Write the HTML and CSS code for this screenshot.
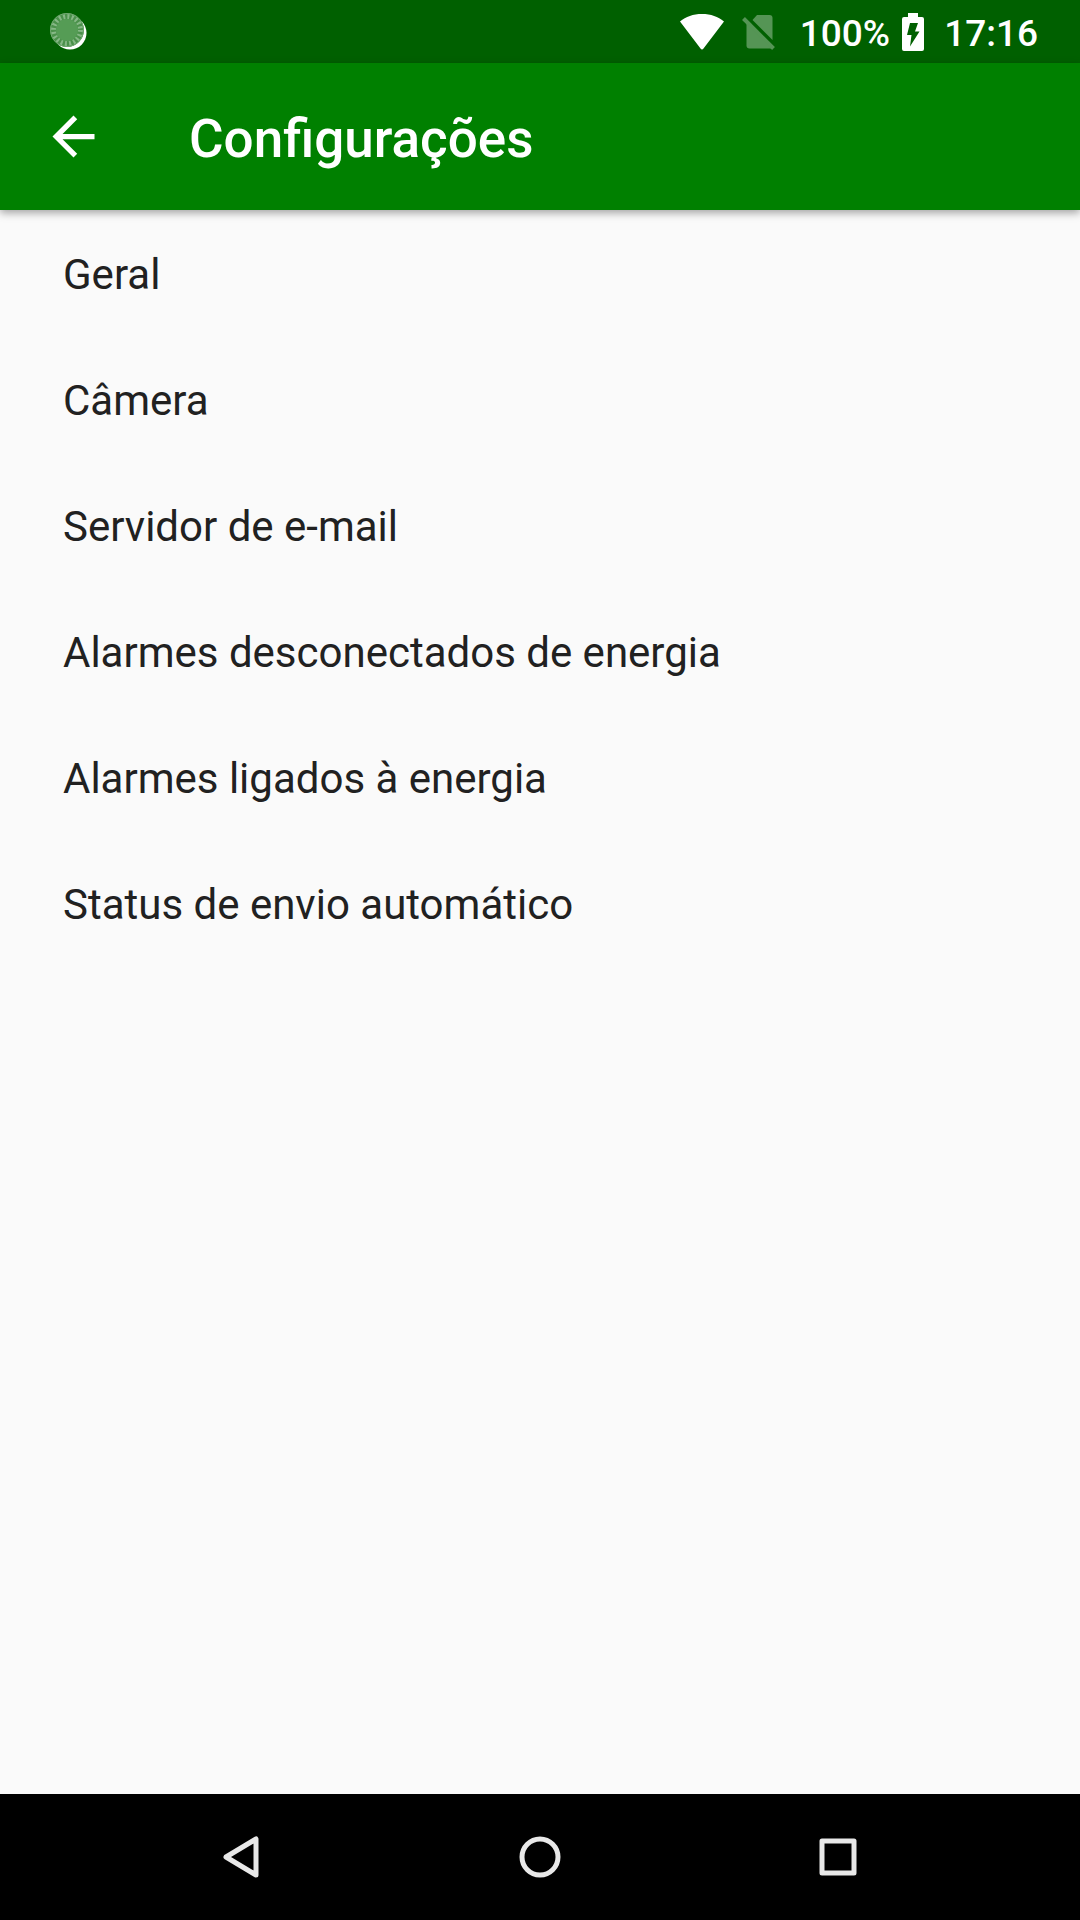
FILE: index.html
```
<!DOCTYPE html>
<html lang="pt-BR">
<head>
    <meta charset="UTF-8">
    <meta name="viewport" content="width=device-width, initial-scale=1.0">
    <title>Configurações</title>
    <link rel="stylesheet" href="styles.css">
</head>
<body>
    <div class="status-bar">
        <svg class="app-icon" viewBox="0 0 40 40" width="40" height="40">
            <circle cx="22" cy="21" r="16.500" fill="#fff"/>
            <circle cx="19" cy="18" r="17" fill="#4a904a"/>
            <circle cx="19" cy="18" r="13.500" fill="none" stroke="#86b886" stroke-width="5" stroke-dasharray="2 2.240"/>
            <circle cx="19" cy="18" r="11" fill="#559c55"/>
            <circle cx="19" cy="18" r="16.500" fill="none" stroke="#6fa86f" stroke-width="1"/>
        </svg>
        <div class="status-right">
            <svg class="wifi" viewBox="0 0 46 38" width="46" height="38">
                <path d="M1 8.500C7 3.500 14 1 23 1s16 2.500 22 7.500L24.500 35.500q-1.500 2-3 0z" fill="#fff"/>
            </svg>
            <svg class="sim" viewBox="0 0 36 38" width="36" height="38">
                <path d="M17 2h12.500a3 3 0 0 1 3 3v22l-20-20z" fill="#559555"/>
                <path d="M6.500 8.500l26.500 27H9.500a3 3 0 0 1-3-3z" fill="#559555"/>
                <path d="M3.500 5.500l30 30" fill="none" stroke="#559555" stroke-width="4"/>
            </svg>
            <span class="percent">100%</span>
            <svg class="battery" viewBox="0 0 22 38" width="22" height="38">
                <path d="M6 4V0h10v4h4a2 2 0 0 1 2 2v30a2 2 0 0 1-2 2H2a2 2 0 0 1-2-2V6a2 2 0 0 1 2-2z" fill="#fff"/>
                <path d="M8 10h8l-3 8.500h4.500L8 33.500l1.500-11.500H5z" fill="#006000"/>
            </svg>
            <span class="time">17:16</span>
        </div>
    </div>

    <header class="app-bar">
        <button class="back" type="button" aria-label="Voltar">
            <svg viewBox="0 0 24 24" width="63" height="63">
                <path d="M20 11H7.830l5.590-5.590L12 4l-8 8 8 8 1.410-1.410L7.830 13H20z" fill="#fff"/>
            </svg>
        </button>
        <h1>Configurações</h1>
    </header>

    <main>
        <ul class="settings">
            <li><a href="#geral">Geral</a></li>
            <li><a href="#camera">Câmera</a></li>
            <li><a href="#email">Servidor de e-mail</a></li>
            <li><a href="#desconectados">Alarmes desconectados de energia</a></li>
            <li><a href="#ligados">Alarmes ligados à energia</a></li>
            <li><a href="#status">Status de envio automático</a></li>
        </ul>
    </main>

    <nav class="nav-bar">
        <button type="button" aria-label="Voltar">
            <svg viewBox="0 0 44 44" width="44" height="44">
                <path d="M36 4v36L6 22z"/>
            </svg>
        </button>
        <button type="button" aria-label="Início">
            <svg viewBox="0 0 44 44" width="44" height="44">
                <circle cx="22" cy="22" r="18"/>
            </svg>
        </button>
        <button type="button" aria-label="Recentes">
            <svg viewBox="0 0 44 44" width="44" height="44">
                <path d="M6 6h32v32H6z"/>
            </svg>
        </button>
    </nav>
</body>
</html>
```
FILE: styles.css
```
* { box-sizing: border-box; }
body { font-family: Roboto, sans-serif; background-color: #fafafa; color: #212121; margin: 0; min-height: 100vh; display: flex; flex-direction: column; }
svg { display: block; }
button { padding: 0; border: none; background: none; cursor: pointer; }

.status-bar { display: flex; align-items: center; justify-content: space-between; height: 63px; padding: 0 42px 0 48px; background-color: #006000; color: #fff; font-size: 37px; font-weight: 500; line-height: 63px; }
.status-right { display: flex; align-items: center; }
.sim { margin-left: 15px; }
.percent { margin-left: 24px; padding-top: 3px; }
.battery { margin-left: 12px; }
.time { margin-left: 20px; padding-top: 3px; }

.app-bar { display: flex; align-items: center; height: 147px; padding: 0 42px; background-color: #008000; color: #fff; box-shadow: 0 3px 8px rgba(0,0,0,0.35); }
.app-bar h1 { margin: 0 0 0 84px; padding-top: 4px; font-size: 53px; font-weight: 500; line-height: 62px; }

main { flex: 1; }
.settings { margin: 0; padding: 0; list-style: none; }
.settings a { display: block; padding: 40px 63px 36px; color: #212121; font-size: 42px; line-height: 50px; text-decoration: none; }

.nav-bar { display: flex; padding: 0 93px; height: 126px; background-color: #000; }
.nav-bar button { flex: 1; display: flex; align-items: center; justify-content: center; }
.nav-bar svg { fill: none; stroke: #e8e8e8; stroke-width: 5; stroke-linejoin: round; }
```
